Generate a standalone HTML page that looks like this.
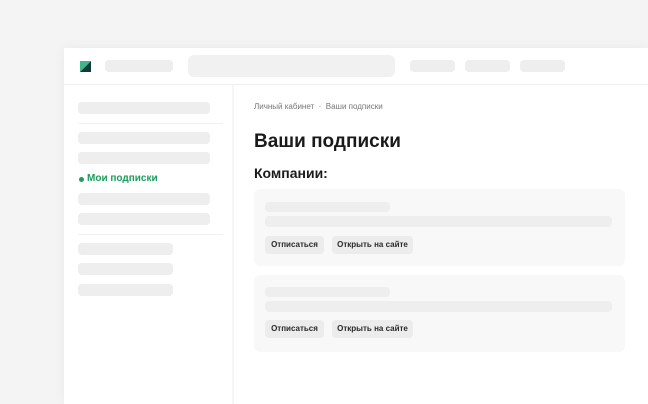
<!DOCTYPE html>
<html><head><meta charset="utf-8"><style>
*{margin:0;padding:0;box-sizing:border-box}
body{width:648px;height:404px;background:#f4f4f4;font-family:"Liberation Sans",sans-serif;position:relative;overflow:hidden}
.a{position:absolute}
.s{position:absolute;background:#eeeeee;border-radius:4px}
.btn{position:absolute;background:#ececec;border-radius:4px;font-size:8px;font-weight:bold;color:#2a2a2a;line-height:18px;text-align:center}
.card{position:absolute;left:254px;width:371px;height:77px;background:#f8f8f8;border-radius:6px}
</style></head><body>
<div class="a" style="left:64px;top:48px;width:584px;height:356px;background:#fff;box-shadow:0 0 12px rgba(0,0,0,0.05)"></div>
<div class="a" style="left:64px;top:84px;width:584px;height:1px;background:#efefef"></div>
<div class="a" style="left:232px;top:85px;width:2px;height:319px;background:#f6f6f6"></div>
<svg class="a" style="left:80px;top:61px" width="11" height="11"><polygon points="0,0 11,0 0,11" fill="#3fb58a"/><polygon points="11,0 11,11 0,11" fill="#0f3b3a"/></svg>
<div class="s" style="left:105px;top:60px;width:68px;height:12px"></div>
<div class="s" style="left:188px;top:55px;width:207px;height:22px;border-radius:6px;background:#f1f1f1"></div>
<div class="s" style="left:410px;top:60px;width:45px;height:12px"></div>
<div class="s" style="left:465px;top:60px;width:45px;height:12px"></div>
<div class="s" style="left:520px;top:60px;width:45px;height:12px"></div>
<div class="s" style="left:78px;top:102px;width:132px;height:12px"></div>
<div class="a" style="left:78px;top:123px;width:145px;height:1px;background:#f0f0f0"></div>
<div class="s" style="left:78px;top:132px;width:132px;height:12px"></div>
<div class="s" style="left:78px;top:152px;width:132px;height:12px"></div>
<div class="a" style="left:79px;top:177px;width:5px;height:5px;border-radius:50%;background:#1a9e5c"></div>
<div class="a" style="left:87px;top:173px;font-size:10px;font-weight:bold;color:#1a9e5c">Мои подписки</div>
<div class="s" style="left:78px;top:193px;width:132px;height:12px"></div>
<div class="s" style="left:78px;top:213px;width:132px;height:12px"></div>
<div class="a" style="left:78px;top:234px;width:145px;height:1px;background:#f0f0f0"></div>
<div class="s" style="left:78px;top:243px;width:95px;height:12px"></div>
<div class="s" style="left:78px;top:263px;width:95px;height:12px"></div>
<div class="s" style="left:78px;top:284px;width:95px;height:12px"></div>
<div class="a" style="left:254px;top:102px;font-size:8px;color:#777">Личный кабинет &nbsp;·&nbsp; Ваши подписки</div>
<div class="a" style="left:254px;top:131px;font-size:19px;font-weight:bold;color:#1a1a1a">Ваши подписки</div>
<div class="a" style="left:254px;top:165px;font-size:14px;font-weight:bold;color:#1a1a1a">Компании:</div>
<div class="card" style="top:189px"></div>
<div class="s" style="left:265px;top:202px;width:125px;height:10px"></div>
<div class="s" style="left:265px;top:216px;width:347px;height:11px"></div>
<div class="btn" style="left:265px;top:236px;width:59px">Отписаться</div>
<div class="btn" style="left:332px;top:236px;width:81px">Открыть на сайте</div>
<div class="card" style="top:275px"></div>
<div class="s" style="left:265px;top:287px;width:125px;height:10px"></div>
<div class="s" style="left:265px;top:301px;width:347px;height:11px"></div>
<div class="btn" style="left:265px;top:320px;width:59px">Отписаться</div>
<div class="btn" style="left:332px;top:320px;width:81px">Открыть на сайте</div>
</body></html>
